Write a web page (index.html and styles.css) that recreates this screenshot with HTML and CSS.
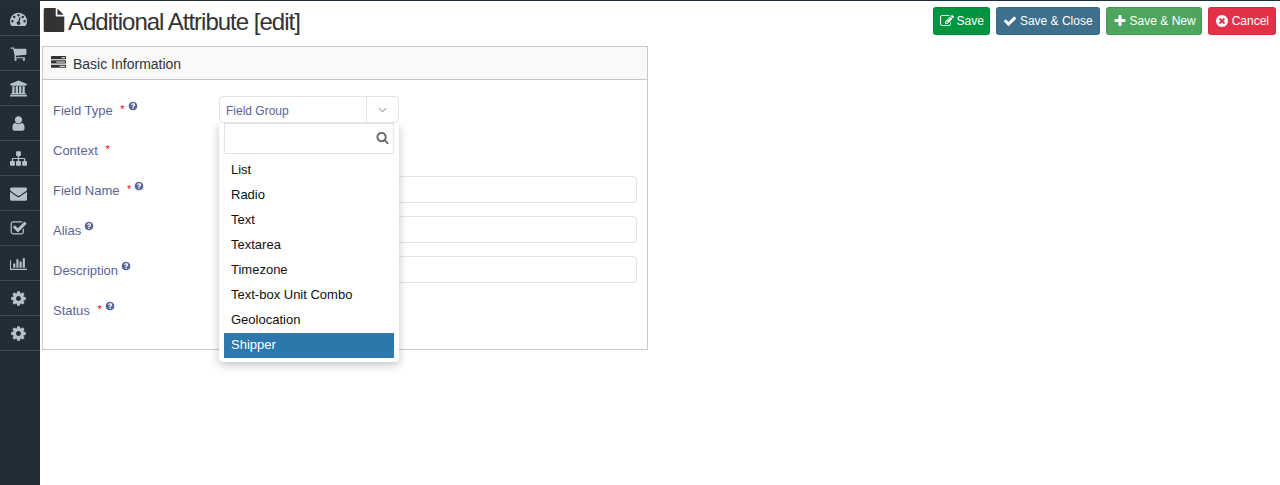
FILE: index.html
```html
<!DOCTYPE html>
<html lang="en">
<head>
  <meta charset="UTF-8">
  <meta name="viewport" content="width=device-width, initial-scale=1.0">
  <title>Additional Attribute [edit]</title>
  <link rel="stylesheet" href="styles.css">
</head>
<body>
  <svg class="sprite" xmlns="http://www.w3.org/2000/svg">
    <symbol id="i-dashboard" viewBox="0 0 1792 1792"><path d="M384 1184q0-53-37.5-90.5t-90.5-37.5-90.5 37.5-37.5 90.5 37.5 90.5 90.5 37.5 90.5-37.5 37.5-90.5zm192-448q0-53-37.5-90.5t-90.5-37.5-90.5 37.5-37.5 90.5 37.5 90.5 90.5 37.5 90.5-37.5 37.5-90.5zm428 481l101-382q6-26-7.5-48.5t-38.5-29.5-48 6.5-30 39.5l-101 382q-60 5-107 43.5t-63 98.5q-20 77 20 146t117 89 146-20 89-117q16-60-6-117t-72-91zm660-33q0-53-37.5-90.5t-90.5-37.5-90.5 37.5-37.5 90.5 37.5 90.5 90.5 37.5 90.5-37.5 37.5-90.5zm-640-640q0-53-37.5-90.5t-90.5-37.5-90.5 37.5-37.5 90.5 37.5 90.5 90.5 37.5 90.5-37.5 37.5-90.5zm448 192q0-53-37.5-90.5t-90.5-37.5-90.5 37.5-37.5 90.5 37.5 90.5 90.5 37.5 90.5-37.5 37.5-90.5zm320 448q0 261-141 483-19 29-54 29h-1402q-35 0-54-29-141-221-141-483 0-182 71-348t191-286 286-191 348-71 348 71 286 191 191 286 71 348z"/></symbol>
    <symbol id="i-cart" viewBox="0 0 1792 1792"><path d="M704 1536q0 52-38 90t-90 38-90-38-38-90 38-90 90-38 90 38 38 90zm896 0q0 52-38 90t-90 38-90-38-38-90 38-90 90-38 90 38 38 90zm128-1088v512q0 24-16.5 42.5t-40.5 21.5l-1044 122q13 60 13 70 0 16-24 64h920q26 0 45 19t19 45-19 45-45 19h-1024q-26 0-45-19t-19-45q0-11 8-31.5t16-36 21.5-40 15.5-29.5l-177-823h-204q-26 0-45-19t-19-45 19-45 45-19h256q16 0 28.5 6.5t19.5 15.5 13 24.5 8 26 5.5 29.5 4.5 26h1201q26 0 45 19t19 45z"/></symbol>
    <symbol id="i-bank" viewBox="0 0 1920 1792"><path d="M960 0l960 384v128h-128q0 26-20.5 45t-48.5 19h-1526q-28 0-48.5-19t-20.5-45h-128v-128zm-704 640h256v768h128v-768h256v768h128v-768h256v768h128v-768h256v768h59q28 0 48.5 19t20.5 45v64h-1664v-64q0-26 20.5-45t48.5-19h59v-768zm1595 960q28 0 48.5 19t20.5 45v128h-1920v-128q0-26 20.5-45t48.5-19h1782z"/></symbol>
    <symbol id="i-user" viewBox="0 0 1792 1792"><path d="M1536 1399q0 109-62.5 187t-150.5 78h-854q-88 0-150.5-78t-62.5-187q0-85 8.5-160.5t31.5-152 58.5-131 94-89 134.5-34.5q131 128 313 128t313-128q76 0 134.5 34.5t94 89 58.5 131 31.5 152 8.5 160.5zm-256-887q0 159-112.5 271.5t-271.5 112.5-271.5-112.5-112.5-271.5 112.5-271.5 271.5-112.5 271.5 112.5 112.5 271.5z"/></symbol>
    <symbol id="i-sitemap" viewBox="0 0 1792 1792"><path d="M1792 1248v320q0 40-28 68t-68 28h-320q-40 0-68-28t-28-68v-320q0-40 28-68t68-28h96v-192h-512v192h96q40 0 68 28t28 68v320q0 40-28 68t-68 28h-320q-40 0-68-28t-28-68v-320q0-40 28-68t68-28h96v-192h-512v192h96q40 0 68 28t28 68v320q0 40-28 68t-68 28h-320q-40 0-68-28t-28-68v-320q0-40 28-68t68-28h96v-192q0-52 38-90t90-38h512v-192h-96q-40 0-68-28t-28-68v-320q0-40 28-68t68-28h320q40 0 68 28t28 68v320q0 40-28 68t-68 28h-96v192h512q52 0 90 38t38 90v192h96q40 0 68 28t28 68z"/></symbol>
    <symbol id="i-envelope" viewBox="0 0 1792 1792"><path d="M1792 710v794q0 66-47 113t-113 47h-1472q-66 0-113-47t-47-113v-794q44 49 101 87 362 246 497 345 57 42 92.5 65.5t94.5 48 110 24.5h2q51 0 110-24.5t94.5-48 92.5-65.5q170-123 498-345 57-39 100-87zm0-294q0 79-49 151t-122 123q-376 261-468 325-10 7-42.5 30.5t-54 38-52 32.5-57.5 27-50 9h-2q-23 0-50-9t-57.5-27-52-32.5-54-38-42.5-30.5q-91-64-262-182.5t-205-142.5q-62-42-117-115.5t-55-136.5q0-78 41.5-130t118.5-52h1472q65 0 112.5 47t47.5 113z"/></symbol>
    <symbol id="i-check-square" viewBox="0 0 1792 1792"><path d="M1472 930v318q0 119-84.5 203.5t-203.5 84.5h-832q-119 0-203.5-84.5t-84.5-203.5v-832q0-119 84.5-203.5t203.5-84.5h832q63 0 117 25 15 7 18 23 3 17-9 29l-49 49q-10 10-23 10-3 0-9-2-23-6-45-6h-832q-66 0-113 47t-47 113v832q0 66 47 113t113 47h832q66 0 113-47t47-113v-254q0-13 9-22l64-64q10-10 23-10 6 0 12 3 20 8 20 29zm231-489l-814 814q-24 24-57 24t-57-24l-430-430q-24-24-24-57t24-57l110-110q24-24 57-24t57 24l263 263 647-647q24-24 57-24t57 24l110 110q24 24 24 57t-24 57z"/></symbol>
    <symbol id="i-chart" viewBox="0 0 2048 1792"><path d="M640 896v512h-256v-512h256zm384-512v1024h-256v-1024h256zm1024 1152v128h-2048v-1152h128v1024h1920zm-640-896v768h-256v-768h256zm384-384v1152h-256v-1152h256z"/></symbol>
    <symbol id="i-cog" viewBox="0 0 1792 1792"><path d="M1152 896q0-106-75-181t-181-75-181 75-75 181 75 181 181 75 181-75 75-181zm512-109v222q0 12-8 23t-20 13l-185 28q-19 54-39 91 35 50 107 138 10 12 10 25t-9 23q-27 37-99 108t-94 71q-12 0-26-9l-138-108q-44 23-91 38-16 136-29 186-7 28-36 28h-222q-14 0-24.5-8.5t-11.5-21.5l-28-184q-49-16-90-37l-141 107q-10 9-25 9-14 0-25-11-126-114-165-168-7-10-7-23 0-12 8-23 15-21 51-66.5t54-70.5q-27-50-41-99l-183-27q-13-2-21-12.5t-8-23.5v-222q0-12 8-23t19-13l186-28q14-46 39-92-40-57-107-138-10-12-10-24 0-10 9-23 26-36 98.5-107.5t94.5-71.5q13 0 26 10l138 107q44-23 91-38 16-136 29-186 7-28 36-28h222q14 0 24.5 8.5t11.5 21.5l28 184q49 16 90 37l142-107q9-9 24-9 13 0 25 10 129 119 165 170 7 8 7 22 0 12-8 23-15 21-51 66.5t-54 70.5q26 50 41 98l183 28q13 2 21 12.5t8 23.5z"/></symbol>
    <symbol id="i-file" viewBox="0 0 1792 1792"><path d="M1152 512v-472q22 14 36 28l408 408q14 14 28 36h-472zm-128 32q0 40 28 68t68 28h544v1056q0 40-28 68t-68 28h-1344q-40 0-68-28t-28-68v-1600q0-40 28-68t68-28h800v544z"/></symbol>
    <symbol id="i-tasks" viewBox="0 0 1792 1792"><path d="M1024 1408h640v-128h-640v128zm-384-512h1024v-128h-1024v128zm640-512h384v-128h-384v128zm512 832v256q0 26-19 45t-45 19h-1664q-26 0-45-19t-19-45v-256q0-26 19-45t45-19h1664q26 0 45 19t19 45zm0-512v256q0 26-19 45t-45 19h-1664q-26 0-45-19t-19-45v-256q0-26 19-45t45-19h1664q26 0 45 19t19 45zm0-512v256q0 26-19 45t-45 19h-1664q-26 0-45-19t-19-45v-256q0-26 19-45t45-19h1664q26 0 45 19t19 45z"/></symbol>
    <symbol id="i-edit" viewBox="0 0 1792 1792"><path d="M888 1184l116-116-152-152-116 116v56h96v96h56zm440-720q-16-16-33 1l-350 350q-17 17-1 33t33-1l350-350q17-17 1-33zm80 594v190q0 119-84.5 203.5t-203.5 84.5h-832q-119 0-203.5-84.5t-84.5-203.5v-832q0-119 84.5-203.5t203.5-84.5h832q63 0 117 25 15 7 18 23 3 17-9 29l-49 49q-14 14-32 8-23-6-45-6h-832q-66 0-113 47t-47 113v832q0 66 47 113t113 47h832q66 0 113-47t47-113v-126q0-13 9-22l64-64q15-15 35-7t20 29zm-96-738l288 288-672 672h-288v-288zm444 132l-92 92-288-288 92-92q28-28 68-28t68 28l152 152q28 28 28 68t-28 68z"/></symbol>
    <symbol id="i-check" viewBox="0 0 1792 1792"><path d="M1671 566q0 40-28 68l-724 724-136 136q-28 28-68 28t-68-28l-136-136-362-362q-28-28-28-68t28-68l136-136q28-28 68-28t68 28l294 295 656-657q28-28 68-28t68 28l136 136q28 28 28 68z"/></symbol>
    <symbol id="i-plus" viewBox="0 0 1792 1792"><path d="M1600 736v192q0 40-28 68t-68 28h-416v416q0 40-28 68t-68 28h-192q-40 0-68-28t-28-68v-416h-416q-40 0-68-28t-28-68v-192q0-40 28-68t68-28h416v-416q0-40 28-68t68-28h192q40 0 68 28t28 68v416h416q40 0 68 28t28 68z"/></symbol>
    <symbol id="i-times" viewBox="0 0 1792 1792"><path d="M1277 1122q0-26-19-45l-181-181 181-181q19-19 19-45 0-27-19-46l-90-90q-19-19-46-19-26 0-45 19l-181 181-181-181q-19-19-45-19-27 0-46 19l-90 90q-19 19-19 46 0 26 19 45l181 181-181 181q-19 19-19 45 0 27 19 46l90 90q19 19 46 19 26 0 45-19l181-181 181 181q19 19 45 19 27 0 46-19l90-90q19-19 19-46zm387-226q0 209-103 385.5t-279.5 279.5-385.5 103-385.5-103-279.5-279.5-103-385.5 103-385.5 279.5-279.5 385.5-103 385.5 103 279.5 279.5 103 385.5z"/></symbol>
    <symbol id="i-help" viewBox="0 0 1792 1792"><path d="M1024 1376v-192q0-14-9-23t-23-9h-192q-14 0-23 9t-9 23v192q0 14 9 23t23 9h192q14 0 23-9t9-23zm256-672q0-88-55.5-163t-138.5-116-170-41q-243 0-371 213-15 24 8 42l132 100q7 6 19 6 16 0 25-12 53-68 86-92 34-24 86-24 48 0 85.5 26t37.5 59q0 38-20 61t-68 45q-63 28-115.5 86.5t-52.5 125.5v36q0 14 9 23t23 9h192q14 0 23-9t9-23q0-19 21.5-49.5t54.5-49.5q32-18 49-28.5t46-35 44.5-48 28-60.5 12.5-81zm384 192q0 209-103 385.5t-279.5 279.5-385.5 103-385.5-103-279.5-279.5-103-385.5 103-385.5 279.5-279.5 385.5-103 385.5 103 279.5 279.5 103 385.5z"/></symbol>
    <symbol id="i-search" viewBox="0 0 1792 1792"><path d="M1216 832q0-185-131.5-316.5t-316.5-131.5-316.5 131.5-131.5 316.5 131.5 316.5 316.5 131.5 316.5-131.5 131.5-316.5zm512 832q0 52-38 90t-90 38q-54 0-90-38l-343-342q-179 124-399 124-143 0-273.5-55.5t-225-150-150-225-55.5-273.5 55.5-273.5 150-225 225-150 273.5-55.5 273.5 55.5 225 150 150 225 55.5 273.5q0 220-124 399l343 343q37 37 37 90z"/></symbol>
  </svg>

  <div class="layout">
    <nav class="sidebar">
      <a class="side-link" href="#"><svg class="side-icon"><use href="#i-dashboard"/></svg></a>
      <a class="side-link" href="#"><svg class="side-icon"><use href="#i-cart"/></svg></a>
      <a class="side-link" href="#"><svg class="side-icon"><use href="#i-bank"/></svg></a>
      <a class="side-link" href="#"><svg class="side-icon"><use href="#i-user"/></svg></a>
      <a class="side-link" href="#"><svg class="side-icon"><use href="#i-sitemap"/></svg></a>
      <a class="side-link" href="#"><svg class="side-icon"><use href="#i-envelope"/></svg></a>
      <a class="side-link" href="#"><svg class="side-icon"><use href="#i-check-square"/></svg></a>
      <a class="side-link" href="#"><svg class="side-icon"><use href="#i-chart"/></svg></a>
      <a class="side-link" href="#"><svg class="side-icon"><use href="#i-cog"/></svg></a>
      <a class="side-link" href="#"><svg class="side-icon"><use href="#i-cog"/></svg></a>
    </nav>

    <main class="content">
      <header class="toolbar">
        <h1 class="page-title"><svg class="title-icon"><use href="#i-file"/></svg>Additional Attribute [edit]</h1>
        <div class="actions">
          <a class="btn btn-save" href="#"><svg class="btn-icon"><use href="#i-edit"/></svg>Save</a>
          <a class="btn btn-close" href="#"><svg class="btn-icon"><use href="#i-check"/></svg>Save &amp; Close</a>
          <a class="btn btn-new" href="#"><svg class="btn-icon"><use href="#i-plus"/></svg>Save &amp; New</a>
          <a class="btn btn-cancel" href="#"><svg class="btn-icon"><use href="#i-times"/></svg>Cancel</a>
        </div>
      </header>

      <section class="panel">
        <h2 class="panel-head"><svg class="panel-icon"><use href="#i-tasks"/></svg>Basic Information</h2>
        <div class="panel-body">
          <div class="row">
            <label class="label">Field Type <span class="req">*</span><svg class="help"><use href="#i-help"/></svg></label>
            <div class="select">
              <span class="select-value">Field Group</span>
              <span class="select-arrow">
                <svg class="chevron" viewBox="0 0 10 6"><polyline points="1,1 5,5 9,1"/></svg>
              </span>
              <div class="dropdown">
                <div class="search">
                  <input class="search-input" type="text">
                  <svg class="search-icon"><use href="#i-search"/></svg>
                </div>
                <ul class="options">
                  <li class="option">List</li>
                  <li class="option">Radio</li>
                  <li class="option">Text</li>
                  <li class="option">Textarea</li>
                  <li class="option">Timezone</li>
                  <li class="option">Text-box Unit Combo</li>
                  <li class="option">Geolocation</li>
                  <li class="option active">Shipper</li>
                </ul>
              </div>
            </div>
          </div>
          <div class="row">
            <label class="label">Context <span class="req">*</span></label>
          </div>
          <div class="row">
            <label class="label">Field Name <span class="req">*</span><svg class="help"><use href="#i-help"/></svg></label>
            <input class="input" type="text">
          </div>
          <div class="row">
            <label class="label">Alias<svg class="help"><use href="#i-help"/></svg></label>
            <input class="input" type="text">
          </div>
          <div class="row">
            <label class="label">Description<svg class="help"><use href="#i-help"/></svg></label>
            <input class="input" type="text">
          </div>
          <div class="row">
            <label class="label">Status <span class="req">*</span><svg class="help"><use href="#i-help"/></svg></label>
          </div>
        </div>
      </section>
    </main>
  </div>
</body>
</html>
```

FILE: styles.css
```css
* {
  box-sizing: border-box;
}

html,
body {
  height: 100%;
}

body {
  margin: 0;
  font-family: "Liberation Sans", Arial, sans-serif;
  font-size: 13px;
  color: #333;
  background: #fff;
  overflow: hidden;
}

.sprite {
  display: none;
}

.layout {
  display: flex;
  height: 100%;
  border-top: 1px solid #212f38;
}

/* left icon bar */
.sidebar {
  flex: 0 0 40px;
  background: #222e35;
}

.side-link {
  display: flex;
  align-items: center;
  justify-content: center;
  height: 35px;
  padding-right: 4px;
  border-bottom: 1px solid #3a4a55;
}

.side-icon {
  width: 17px;
  height: 17px;
  fill: #b4c2ca;
}

.content {
  flex: 1;
  padding: 0 4px 0 2px;
}

.toolbar {
  display: flex;
  justify-content: space-between;
  height: 45px;
  padding-top: 6px;
}

.page-title {
  display: flex;
  align-items: center;
  height: 30px;
  margin: 0;
  font-size: 24px;
  font-weight: 400;
  letter-spacing: -1px;
  color: #333;
}

.title-icon {
  width: 24px;
  height: 24px;
  margin: -4px 2px 0 0;
  fill: #333;
}

.actions {
  display: flex;
  gap: 6px;
  height: 28px;
}

.btn {
  display: flex;
  align-items: center;
  gap: 3px;
  padding: 0 6px;
  font-size: 12px;
  color: #fff;
  text-decoration: none;
  border: 1px solid rgba(0, 0, 0, 0.08);
  border-radius: 3px;
}

.btn-icon {
  width: 14px;
  height: 14px;
  fill: #fff;
}

.btn-save {
  padding-right: 5px;
  background: #00953f;
}

.btn-close {
  background: #3e6f8c;
}

.btn-new {
  padding-right: 5px;
  background: #4ea55e;
}

.btn-cancel {
  background: #e33147;
}

/* form panel */
.panel {
  width: 606px;
  height: 304px;
  border: 1px solid #c8c8c8;
}

.panel-head {
  display: flex;
  align-items: center;
  height: 33px;
  margin: 0;
  padding: 1px 0 0 8px;
  font-size: 14px;
  font-weight: 400;
  color: #333;
  background: #f9f9f9;
  border-bottom: 1px solid #c8c8c8;
}

.panel-icon {
  width: 15px;
  height: 15px;
  margin: -2px 7px 0 0;
  fill: #333;
}

.panel-body {
  display: flex;
  flex-direction: column;
  gap: 13px;
  padding: 16px 10px 0;
}

.row {
  display: flex;
  height: 27px;
}

.label {
  flex: 0 0 166px;
  height: 27px;
  line-height: 29px;
  color: #5b6497;
}

.req {
  margin-left: 4px;
  font-size: 11px;
  line-height: 1;
  color: #e4002b;
  vertical-align: 2px;
}

.help {
  width: 10px;
  height: 10px;
  margin-left: 3px;
  vertical-align: 4px;
  fill: #5b6497;
}

.input {
  width: 418px;
  height: 27px;
  border: 1px solid #e2e3eb;
  border-radius: 4px;
  background: #fff;
}

/* select with its open list */
.select {
  position: relative;
  display: flex;
  width: 180px;
  height: 27px;
  border: 1px solid #e2e3eb;
  border-radius: 4px;
  font-size: 12px;
  color: #5b6497;
}

.select-value {
  flex: 1;
  padding: 7px 0 0 6px;
}

.select-arrow {
  display: flex;
  align-items: center;
  justify-content: center;
  width: 32px;
  border-left: 1px solid #e2e3eb;
}

.chevron {
  width: 9px;
  height: 6px;
  fill: none;
  stroke: #5b6497;
  stroke-width: 1;
}

.dropdown {
  position: absolute;
  top: 26px;
  left: -1px;
  width: 180px;
  height: 239px;
  padding: 0 5px;
  background: #fff;
  border-radius: 0 0 4px 4px;
  box-shadow: 0 3px 8px rgba(60, 60, 80, 0.3);
  clip-path: inset(0 -14px -14px -14px);
}

.search {
  position: relative;
}

.search-input {
  display: block;
  width: 100%;
  height: 31px;
  border: 1px solid #e2e3eb;
  background: #fff;
}

.search-icon {
  position: absolute;
  top: 8px;
  right: 5px;
  width: 13px;
  height: 13px;
  fill: #666;
}

.options {
  margin: 4px 0 0;
  padding: 0;
  list-style: none;
}

.option {
  height: 25px;
  padding-left: 7px;
  font-size: 13px;
  line-height: 24px;
  color: #111;
}

.option.active {
  color: #fff;
  background: #2c77ab;
}
```
